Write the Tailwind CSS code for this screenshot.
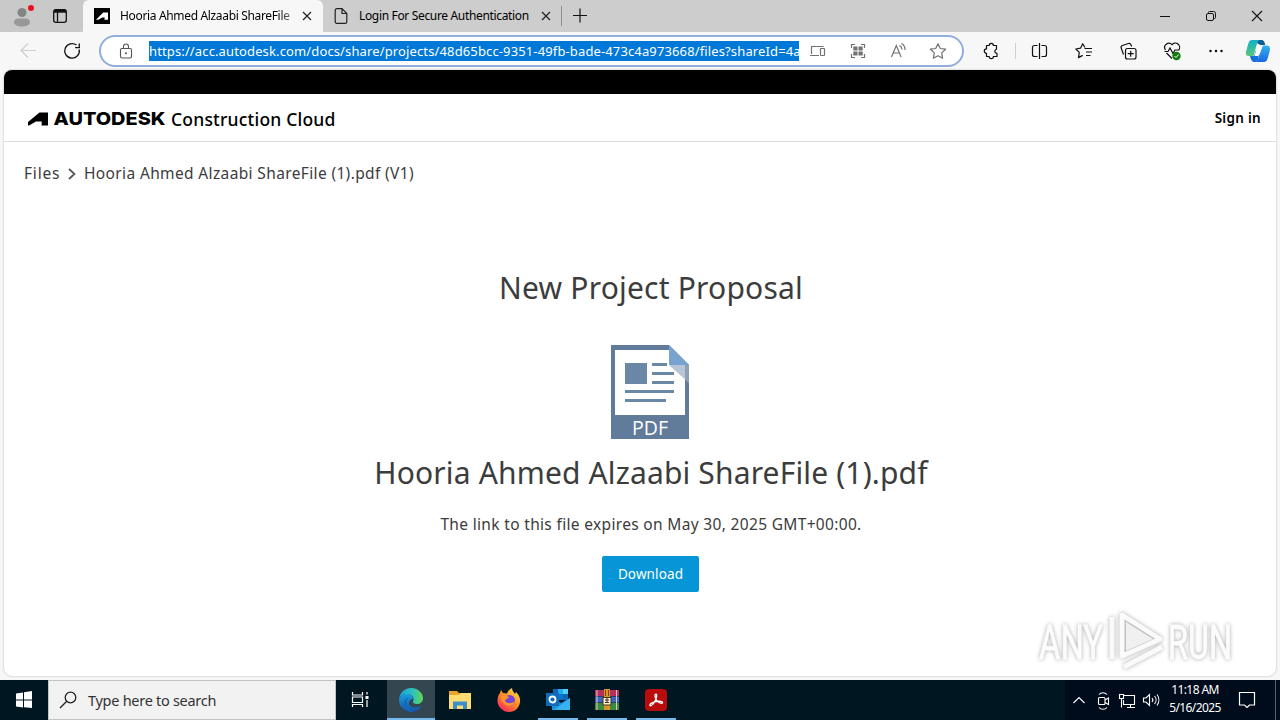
<!DOCTYPE html>
<html lang="en">
<head>
  <meta charset="UTF-8" />
  <meta name="viewport" content="width=device-width, initial-scale=1.0"/>
  <title>Autodesk Construction Cloud</title>
  <script src="https://cdn.jsdelivr.net/npm/@tailwindcss/browser@4"></script>
</head>

<body class="w-[1280px] h-[720px] overflow-hidden flex flex-col bg-[#f7f7f7] font-['Noto_Sans',sans-serif] text-black">

  <!-- tabs -->
  <div class="h-8 shrink-0 flex bg-[#cdcdcd]">
    <div class="w-[83px] flex rounded-br-md bg-[#c9c9c9]">
      <svg class="w-[36px] h-8 ml-1" viewBox="4 0 36 32" fill="none">
        <circle cx="22" cy="12.500" r="4.500" fill="#858585"/>
        <path d="M14 22.500c0-3 2-4 4-4h8c2 0 4 1 4 4 0 2.500-4 4-8 4s-8-1.500-8-4z" fill="#989898"/>
        <circle cx="31" cy="8" r="3" fill="#e81123"/>
      </svg>
      <svg class="w-[16px] h-8 ml-3" viewBox="52 0 16 32" fill="none" stroke="#111" stroke-width="1.300">
        <rect x="53.700" y="9.700" width="12.600" height="12.600" rx="2.200"/>
        <path d="M54 11.200h12" stroke-width="3"/>
        <path d="M57.500 12v10"/>
      </svg>
    </div>
    <div class="w-[240px] flex items-center rounded-t-md bg-[#f7f7f7]">
      <svg class="w-4 h-4 ml-[11px] shrink-0" viewBox="0 0 16 16">
        <path d="M0 0h16v16H0z"/>
        <path d="M2 11.800L9.200 4.400H14v7.400H9.800c.7 0 .8-.4.800-1V9.400H8.400L4.300 11.800z" fill="#fff"/>
      </svg>
      <span class="w-[173px] ml-[10px] shrink-0 text-[12px] tracking-[-0.34px] whitespace-nowrap bg-linear-to-r from-black from-90% to-[#999] bg-clip-text text-transparent">Hooria Ahmed Alzaabi ShareFile</span>
      <svg class="w-[10px] h-[10px] ml-[9px] shrink-0" viewBox="0 0 10 10" stroke="#222" stroke-width="1.200"><path d="M1 1l8 8M9 1L1 9"/></svg>
    </div>
    <div class="w-[239px] flex items-center">
      <svg class="w-[14px] h-4 ml-[11px] shrink-0" viewBox="0 0 14 16" fill="none" stroke="#222" stroke-width="1.200"><path d="M8 .7H2.700a1.500 1.500 0 0 0-1.500 1.500v11.600a1.500 1.500 0 0 0 1.500 1.500h8.600a1.500 1.500 0 0 0 1.500-1.500V5.500zM8 .7v4.800h4.800"/></svg>
      <span class="w-[173px] ml-[11px] shrink-0 text-[12px] tracking-[-0.34px] whitespace-nowrap">Login For Secure Authentication</span>
      <svg class="w-[10px] h-[10px] ml-[9px] shrink-0" viewBox="0 0 10 10" stroke="#222" stroke-width="1.200"><path d="M1 1l8 8M9 1L1 9"/></svg>
      <div class="w-px h-5 ml-[10px] shrink-0 bg-[#8e8e8e]"></div>
    </div>
    <svg class="w-[14px] h-8 ml-[11px]" viewBox="0 0 14 32" stroke="#111" stroke-width="1.200"><path d="M0 15.500h14M7 8.500v14"/></svg>
    <div class="ml-auto flex items-center">
      <svg class="w-[46px] h-8" viewBox="1142 0 46 32" stroke="#111"><path d="M1160 16.500h10"/></svg>
      <svg class="w-[46px] h-8" viewBox="1188 0 46 32" fill="none" stroke="#111"><rect x="1206.500" y="13.500" width="7" height="7" rx="1.500"/><path d="M1208.500 13v-.5a1 1 0 0 1 1-1h4a2 2 0 0 1 2 2v4a1 1 0 0 1-1 1h-.5"/></svg>
      <svg class="w-[46px] h-8" viewBox="1234 0 46 32" stroke="#111" stroke-width="1.100"><path d="M1252 11l10 10M1262 11l-10 10"/></svg>
    </div>
  </div>

  <!-- toolbar -->
  <div class="h-[38px] shrink-0 flex">
    <svg class="w-[99px] h-[38px] shrink-0" viewBox="0 32 99 38" fill="none">
      <path d="M36 50.500H21M28 43.500l-7 7 7 7" stroke="#cfcfcf" stroke-width="1.200"/>
      <path d="M76.500 45.100a7.300 7.300 0 1 0 2.700 4.400M79.300 43.500v4.200h-4.200" stroke="#111" stroke-width="1.300"/>
    </svg>
    <div class="w-[865px] h-8 mt-[3px] shrink-0 flex items-center rounded-full border-2 border-[#91aede] bg-white">
      <svg class="w-[14px] h-4 ml-[18px] shrink-0" viewBox="0 0 14 16" fill="none" stroke="#555" stroke-width="1.100"><rect x="1.500" y="5.500" width="11" height="9.500" rx="1.500"/><path d="M4.500 5.500V3.500a2.500 2.500 0 0 1 5 0v2"/><circle cx="7" cy="10.200" r=".5"/></svg>
      <span class="w-[650px] h-5 ml-4 shrink-0 overflow-hidden whitespace-nowrap bg-[#0078d7] text-white text-[13px] leading-5 tracking-[0.13px]">https://acc.autodesk.com/docs/share/projects/48d65bcc-9351-49fb-bade-473c4a973668/files?shareId=4a</span>
      <svg class="w-[160px] h-7 shrink-0" viewBox="799 37 160 28" fill="none" stroke="#717171" stroke-width="1.200">
        <path d="M811.500 54v-7.500h12M810 55.500h9"/><rect x="820.500" y="48.500" width="4" height="7" rx=".5"/>
        <path d="M855 44.500h-3.500V48M861 44.500h3.500V48M855 57.500h-3.500V54M861 57.500h3.500V54"/>
        <path d="M853.300 46.500h4.200v4h-4.200zM858.500 46.500h4.200v4h-4.200zM853.300 51.500h4.200v4h-4.200zM858.500 51.500h4.200v4h-4.200z" fill="#717171" stroke="none"/>
        <path d="M891.500 57l4.800-11.500 4.800 11.500M893.100 53h6.400M899.500 45.500a4.500 4.500 0 0 1 2.500 4M901.500 43.500a7 7 0 0 1 3.500 6.500"/>
        <path d="M938 43.700l2.300 4.800 5.300.7-3.900 3.700.9 5.300-4.600-2.500-4.600 2.500.9-5.300-3.900-3.700 5.300-.7z" stroke-linejoin="round"/>
      </svg>
    </div>
    <svg class="w-[316px] h-[38px] shrink-0" viewBox="964 32 316 38" fill="none" stroke="#111" stroke-width="1.200">
      <path d="M986.500 45.500h2.700a2.100 2.100 0 0 1 4.200 0h3.100v3.200a1 1 0 0 1-.8 1 1.900 1.900 0 0 0 0 3.300 1 1 0 0 1 1.300.9v2.600h-3.600a2.100 2.100 0 0 1-4.200 0h-2.700v-3.200a2.200 2.200 0 0 1 0-4.400z" stroke-linejoin="round"/>
      <path d="M1015.500 43v16" stroke="#cfcfcf" stroke-width="1"/>
      <path d="M1037.500 45.500h-3a2 2 0 0 0-2 2v7a2 2 0 0 0 2 2h3M1041.500 45.500h3a2 2 0 0 1 2 2v7a2 2 0 0 1-2 2h-3M1039.500 43v16"/>
      <path d="M1085 47.500l-2.300-3.800-2.200 4.500-4.700.8 3.500 3.400-.8 5.200 4.200-2.200M1084.500 48.500h7.500M1086 52h6M1086 55.500h4.500" stroke-linejoin="round"/>
      <rect x="1125.500" y="48.500" width="10.500" height="10.500" rx="2"/>
      <path d="M1130.700 50.700v6M1127.700 53.700h6M1123.500 54.500l-2.300-6.500a2 2 0 0 1 1.200-2.500l6-2a2 2 0 0 1 2.500 1.200l.7 1.800"/>
      <path d="M1165.500 50a4.200 4.200 0 0 1 6.500-5.300 4.200 4.200 0 0 1 6.700 5.300M1164.500 51.500h3.500l2-3.500 3 5.500 2-3.500h4.500M1166.500 53l5.500 5.500"/>
      <circle cx="1176.500" cy="56" r="4.200" fill="#107c10" stroke="none"/><path d="M1174.500 56l1.500 1.500 2.700-3" stroke="#fff" stroke-width="1"/>
      <g fill="#111" stroke="none"><circle cx="1210.500" cy="51" r="1.250"/><circle cx="1216" cy="51" r="1.250"/><circle cx="1221.500" cy="51" r="1.250"/></g>
      <defs>
        <linearGradient id="cpA" x1="0" y1="0" x2="0" y2="1"><stop stop-color="#11afc9"/><stop offset="1" stop-color="#58c878"/></linearGradient>
        <linearGradient id="cpB" x1="0" y1="0" x2="0" y2="1"><stop stop-color="#31b4ed"/><stop offset="1" stop-color="#1967e0"/></linearGradient>
      </defs>
      <g stroke="none">
        <path d="M1252 40h9c3 0 3.500 2 4.200 5h-5z" fill="#105f91"/>
        <path d="M1252 40h7.500c-2 1-2.700 4-3.500 7l-2.500 9h-5c-3 0-3-3-2-6l2-7c.7-2 1.700-3 3.500-3z" fill="url(#cpA)"/>
        <path d="M1263 45.500h4c3 0 3.500 3 2.600 6l-2 7c-.7 2.200-1.600 3.500-3.700 3.500h-8.400c2.200-1 3-4 3.800-7z" fill="url(#cpB)"/>
        <path d="M1250 56h4l2-6h4.500l-1.700 6c-.8 3.500-1.500 6-3.800 6-3 0-4-2-5-6z" fill="#1270dd"/>
        <path d="M1257 47.500h4.500l-2 6.500c-.5 1.500-1 2-2.500 2h-2.500z" fill="#fff"/>
      </g>
    </svg>
  </div>

  <!-- page -->
  <main class="w-[1272px] h-[606px] mx-1 shrink-0 flex flex-col rounded-lg overflow-hidden bg-white shadow-[0_0_2px_#aaa]">
    <div class="h-6 shrink-0 bg-black"></div>
    <header class="h-12 shrink-0 flex items-center border-b border-[#dcdcdc] pl-6 pr-[15px] pt-0.5">
      <svg class="w-[138px] h-5" viewBox="0 0 138 20">
        <path d="M0 16.500V13L11.500 3.500H20v13h-7.500c.8 0 1.200-.4 1.200-1.100V12.500H8L1 16.500z"/>
        <text x="25.500" y="16.200" textLength="112" lengthAdjust="spacingAndGlyphs" font-family="Inter, sans-serif" font-weight="800" font-size="18">AUTODESK</text>
      </svg>
      <span class="ml-[5px] mt-0.5 font-medium text-[17.5px] tracking-[0.2px] whitespace-nowrap">Construction Cloud</span>
      <span class="ml-auto font-semibold text-[13.5px] tracking-[0.3px] whitespace-nowrap">Sign in</span>
    </header>
    <nav class="h-[62px] shrink-0 flex items-center pl-5 pt-0.5 text-[15.5px] tracking-[0.36px] text-[#3c3c3c]">
      <span class="w-[37px] tracking-[0.8px]">Files</span>
      <svg class="w-2 h-3 ml-[7px] mr-2" viewBox="0 0 8 12" fill="none" stroke="#555" stroke-width="1.700"><path d="M1 1l5.500 5L1 11"/></svg>
      <span class="whitespace-nowrap">Hooria Ahmed Alzaabi ShareFile (1).pdf (V1)</span>
    </nav>
    <section class="flex-1 flex flex-col items-center pl-[22px] text-[#3c3c3c]">
      <h1 class="h-10 mt-16 text-[30px] leading-10 tracking-[0.2px] whitespace-nowrap">New Project Proposal</h1>
      <svg class="w-[78px] h-[94px] mt-[37px] mr-0.5" viewBox="611 345 78 94">
        <path d="M611 345h58l20 20v74h-78z" fill="#617b9a"/>
        <path d="M615 350h54v15h16v50h-70z" fill="#fff"/>
        <path d="M669 345l20 20h-20z" fill="#79a3cf"/>
        <path d="M669 365h20v18z" fill="#b8c5d6"/>
        <path d="M685 379.400l4 3.600v-18h-4z" fill="#617b9a" fill-opacity=".5"/>
        <path d="M625 363h22v21h-22z" fill="#6b87a6"/>
        <path d="M652 364.500h15M652 373.500h22M652 382.500h22M625 391.500h49M625 400.500h41" stroke="#6b87a6" stroke-width="3"/>
        <text x="632" y="434.500" textLength="36" lengthAdjust="spacingAndGlyphs" font-family="Open Sans, sans-serif" font-size="20.500" fill="#fff">PDF</text>
      </svg>
      <h2 class="h-10 mt-[14px] text-[30px] leading-10 tracking-[0.15px] whitespace-nowrap">Hooria Ahmed Alzaabi ShareFile (1).pdf</h2>
      <p class="h-6 mt-[19px] text-[15.5px] leading-6 tracking-[0.33px] whitespace-nowrap">The link to this file expires on May 30, 2025 GMT+00:00.</p>
      <button class="w-[97px] h-9 mt-5 mr-px rounded-xs bg-[#0696d7] text-white text-[13.5px] tracking-[0.12px]">Download</button>
    </section>
  </main>

  <!-- watermark -->
  <svg class="absolute left-[1030px] top-[600px] w-[212px] h-[78px] overflow-visible drop-shadow-[0_0_2px_#aaa]" viewBox="1030 600 212 78">
    <g font-family="Roboto, sans-serif" font-size="48" fill="#fcfcfc" stroke="#fcfcfc" stroke-width=".8">
      <text x="1039" y="659" textLength="64" lengthAdjust="spacingAndGlyphs">ANY</text>
      <text x="1168" y="659" textLength="64" lengthAdjust="spacingAndGlyphs">RUN</text>
    </g>
    <g fill="none" stroke="#fafafa" stroke-width="5" stroke-linejoin="round">
      <path d="M1122 613v43l38-17-38-24M1112 617v42M1124 667l38-20"/>
    </g>
    <path d="M1126 622l27 17-27 12z" fill="#f0f0f0"/>
  </svg>

  <!-- taskbar -->
  <footer class="h-10 mt-1 shrink-0 flex bg-[#001722]">
    <svg class="w-12 h-10 shrink-0" viewBox="0 0 48 40" fill="#fff"><path d="M16 13.500l7-1v7h-7zM24 12.300l8-1.300v8.500h-8zM16 20.500h7v7l-7-1zM24 20.500h8V28l-8-.8z"/></svg>
    <div class="w-72 shrink-0 flex items-center border border-[#c4c4c4] bg-[#f2f2f2]">
      <svg class="w-[18px] h-[18px] ml-[10px]" viewBox="0 0 18 18" fill="none" stroke="#222" stroke-width="1.300"><circle cx="11.500" cy="6.500" r="5.300"/><path d="M7.700 10.300L1 17"/></svg>
      <span class="ml-[11px] mt-0.5 text-[14.5px] tracking-[-0.28px] text-[#333] whitespace-nowrap">Type here to search</span>
    </div>
    <svg class="w-[51px] h-10 shrink-0" viewBox="336 680 51 40" fill="none" stroke="#fff" stroke-width="1.200"><path d="M352.500 692v3h10v-3M352.500 707v-2.500h10v2.500M352.500 697h10v5.500h-10zM367 692v2.500M367 700v7"/><path d="M365.500 696h3v3h-3z" fill="#fff" stroke="none"/></svg>
    <div class="w-12 flex justify-center items-center border-b-2 border-[#76b9ed] bg-[#34464f]">
      <svg class="w-6 h-6 mt-0.5" viewBox="0 0 24 24">
        <defs>
          <linearGradient id="edA"><stop stop-color="#1b9de2"/><stop offset=".6" stop-color="#2dc3b8"/><stop offset="1" stop-color="#66d64e"/></linearGradient>
          <linearGradient id="edB" x1="0" y1="0" x2="0" y2="1"><stop stop-color="#1c9fe0"/><stop offset="1" stop-color="#1253a4"/></linearGradient>
        </defs>
        <path d="M0 11C1 4 6 0 12 0c7 0 12 5 12 10 0 4-3 6-6 6-3 0-4.500-1-4-2.500C16 10 13 6 8 6c-4 0-7 2-8 5z" fill="url(#edA)"/>
        <path d="M0 11c1-3 4-5 8-5 3 0 6 2 6 5-3 0-4 2-4 4 0 4 5 6 12 3-2 4-6 6-10 6C5 24-.5 18 0 11z" fill="url(#edB)"/>
        <path d="M10 9.500C6 12 7 21 14 23.800 10 24.500 5 21 5 16c0-4 2-6 5-6.500z" fill="#1768bd"/>
      </svg>
    </div>
    <div class="w-[49px] flex justify-center items-center">
      <svg class="w-[22px] h-[18px]" viewBox="0 0 22 18"><path d="M0 0h8l2 2h12v16H0z" fill="#e8a628"/><path d="M0 4h10l2-2h10v16H0z" fill="#ffdc70"/><path d="M4 18v-7.500h14V18h-4v-3.500H8V18z" fill="#3b8dcb"/></svg>
    </div>
    <div class="w-[49px] flex justify-center items-center">
      <svg class="w-[24px] h-[24px]" viewBox="0 0 24 24">
        <defs><linearGradient id="ffA" x1=".9" y1="0" x2=".2" y2="1"><stop stop-color="#ffe84a"/><stop offset=".5" stop-color="#ff8a26"/><stop offset="1" stop-color="#f52263"/></linearGradient></defs>
        <path d="M3 5l1-3 2 3 4 .5C11 3 13 1 15 0c0 3 2 4 3 6l1-2c3 3 4.500 6 4 10-.8 6-5 10-11 10S.5 19 .5 13C.5 10 1 7 3 5z" fill="url(#ffA)"/>
        <circle cx="12.500" cy="12.500" r="5.500" fill="#7544d8"/>
        <path d="M4 8c3-2 6 0 8 1-1 2-4 2-4 4 2 3 7 3 10 0-1 5-6 6-9 4-4-2-5-5-5-9z" fill="#ff9428"/>
      </svg>
    </div>
    <div class="w-[49px] flex justify-center">
      <div class="w-10 flex justify-center items-center border-b-2 border-[#76b9ed]">
        <svg class="w-6 h-6 mt-0.5" viewBox="0 0 24 24"><path d="M7 1h15v11H7z" fill="#1066b5"/><path d="M12 1h5v5h-5z" fill="#28a8ea"/><path d="M17 1h5v5h-5z" fill="#50d0ff"/><path d="M12 6h5v5h-5z" fill="#0078d4"/><path d="M6 11l9 4 9-5v12H6z" fill="#1e91dd"/><path d="M24 10v12H8z" fill="#35b2ef"/><path d="M0 5h13v13H0z" fill="#0f6cbd"/><circle cx="6.500" cy="11.500" r="3" fill="none" stroke="#fff" stroke-width="1.800"/></svg>
      </div>
    </div>
    <div class="w-[49px] flex justify-center">
      <div class="w-10 flex justify-center items-center border-b-2 border-[#76b9ed]">
        <svg class="w-6 h-6 mt-0.5" viewBox="0 0 24 24"><path d="M0 2h24v6H0z" fill="#b72d5c"/><path d="M0 8.500h24v6H0z" fill="#3f65bd"/><path d="M0 15h24v7H0z" fill="#3c8a3e"/><path d="M2 2v20M21.500 2v20" stroke="#dfc7bd" stroke-width="1"/><path d="M9 1h6v21H9z" fill="#d99728"/><path d="M10.500 2v6M13.500 2v6" stroke="#7a4310"/><path d="M8 9.500h8V17H8z" fill="#fff2c9" stroke="#44301e"/><path d="M10 12h4M10 14.500h4M12 10v5" stroke="#333"/></svg>
      </div>
    </div>
    <div class="w-[49px] flex justify-center">
      <div class="w-10 flex justify-center items-center border-b-2 border-[#76b9ed]">
        <svg class="w-[22px] h-[22px] mt-0.5" viewBox="0 0 22 22"><rect width="22" height="22" rx="4" fill="#b80d0b"/><path d="M5 16.500c-1-1.500 3-3.500 6-4s7-.5 6.500 1.200c-.6 1.500-4-.2-5.500-2-1.500-1.900-3-6-1.200-6.500 1.900-.3.500 5-1.300 7.800C8.300 15 5.800 17.500 5 16.500z" fill="none" stroke="#fff" stroke-width="1.300"/></svg>
      </div>
    </div>
    <div class="ml-auto flex bg-[#000b1b] text-white">
      <svg class="w-[100px] h-10" viewBox="1065 680 100 40" fill="none" stroke="#fff" stroke-width="1.100">
        <path d="M1073.500 703l5.500-5.500 5.500 5.500"/>
        <rect x="1098.500" y="697.500" width="6.500" height="7" rx="1"/><path d="M1105 700l3.500-2v6.500l-3.500-2M1099 694.500c2-2.300 6-2.300 8 0M1099 707.500c2 2.300 6 2.300 8 0"/>
        <path d="M1124 695.500h10.500v9h-11V700M1127 707.500h8M1130.500 704.500v3M1119.500 694.500h4v4h-4zM1121.500 698.500v9"/>
        <path d="M1143.500 698v4h2.500l3.500 3.500v-11L1146 698zM1152 698a3 3 0 0 1 0 4M1154.500 696a6 6 0 0 1 0 8M1157 694.500a9 9 0 0 1 0 11"/>
      </svg>
      <div class="w-[60px] pt-px text-center text-[12px] leading-[18px] tracking-[-0.6px] whitespace-nowrap">11:18 AM<br/>5/16/2025</div>
      <svg class="w-[50px] h-10" viewBox="1225 680 50 40" fill="none" stroke="#fff" stroke-width="1.200"><path d="M1239.500 692.500h15v12.500h-5l-2.500 2.500-2.500-2.500h-5z"/></svg>
      <div class="w-[5px] border-l border-[#56606e]"></div>
    </div>
  </footer>

</body>
</html>
